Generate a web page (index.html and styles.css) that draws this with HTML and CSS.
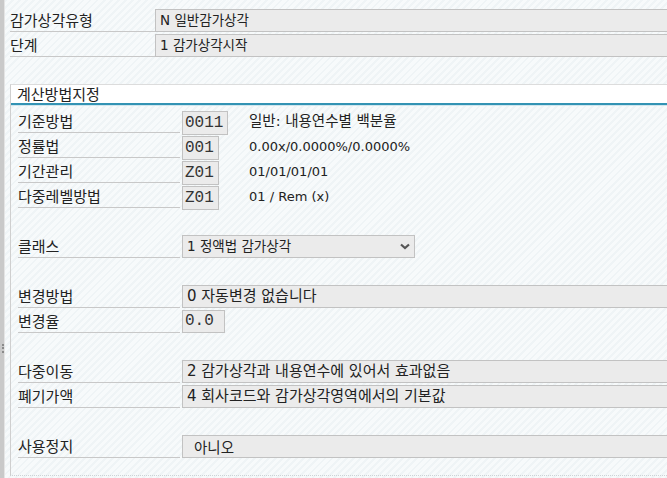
FILE: index.html
```html
<!DOCTYPE html>
<html>

<head>
    <title>감가상각 영역</title>
    <link rel="stylesheet" href="styles.css">
</head>

<body>
    <div class="screen">
        <div class="edge">
            <div class="grip"></div>
        </div>

        <div class="content">
            <div class="top-section">
                <div class="row">
                    <div class="label top-label">감가상각유형</div>
                    <div class="field wide">N 일반감가상각</div>
                </div>
                <div class="row">
                    <div class="label top-label">단계</div>
                    <div class="field wide">1 감가상각시작</div>
                </div>
                <div class="spacer"></div>
            </div>

            <div class="group">
                <div class="group-title">계산방법지정</div>
                <div class="group-body">
                    <div class="row">
                        <div class="label">기준방법</div>
                        <div class="code-cell"><span class="code">0011</span></div>
                        <div class="desc">일반: 내용연수별 백분율</div>
                    </div>
                    <div class="row">
                        <div class="label">정률법</div>
                        <div class="code-cell"><span class="code">001</span></div>
                        <div class="desc num">0.00x/0.0000%/0.0000%</div>
                    </div>
                    <div class="row">
                        <div class="label">기간관리</div>
                        <div class="code-cell"><span class="code">Z01</span></div>
                        <div class="desc num">01/01/01/01</div>
                    </div>
                    <div class="row">
                        <div class="label">다중레벨방법</div>
                        <div class="code-cell"><span class="code">Z01</span></div>
                        <div class="desc num">01 / Rem (x)</div>
                    </div>

                    <div class="spacer"></div>

                    <div class="row">
                        <div class="label">클래스</div>
                        <div class="field select">
                            <span>1 정액법 감가상각</span>
                            <svg class="chevron" width="10" height="7" viewBox="0 0 10 7">
                                <path d="M1 1.5 L5 5 L9 1.5" fill="none" stroke="#555" stroke-width="2.2" />
                            </svg>
                        </div>
                    </div>

                    <div class="spacer"></div>

                    <div class="row">
                        <div class="label">변경방법</div>
                        <div class="field wide large">0 자동변경 없습니다</div>
                    </div>
                    <div class="row">
                        <div class="label">변경율</div>
                        <div class="field rate">0.0</div>
                    </div>

                    <div class="spacer"></div>

                    <div class="row">
                        <div class="label">다중이동</div>
                        <div class="field wide large">2 감가상각과 내용연수에 있어서 효과없음</div>
                    </div>
                    <div class="row">
                        <div class="label">폐기가액</div>
                        <div class="field wide large">4 회사코드와 감가상각영역에서의 기본값</div>
                    </div>

                    <div class="spacer"></div>

                    <div class="row">
                        <div class="label">사용정지</div>
                        <div class="field wide indent">아니오</div>
                    </div>
                </div>
            </div>
        </div>
    </div>
</body>

</html>
```

FILE: styles.css
```css
:root {
    --text-color: #222;
    --field-bg: #ebebeb;
    --field-border: #c2c2c2;
    --line-color: #c8c8c8;
    --accent: #3393b4;
    --bg-a: #f7fafb;
    --bg-b: #eff4f6;
}

* {
    box-sizing: border-box;
    margin: 0;
    padding: 0;
}

body {
    width: 667px;
    height: 478px;
    overflow: hidden;
    font-family: "Noto Sans CJK KR", sans-serif;
    font-size: 15px;
    color: var(--text-color);
    background: repeating-linear-gradient(135deg, var(--bg-a) 0 3px, var(--bg-b) 3px 5px);
}

.screen {
    display: flex;
    height: 478px;
}

.edge {
    width: 5px;
    flex-shrink: 0;
    background: #c9c9c9;
    border-right: 1px solid #e4e4e4;
}

.grip {
    width: 2px;
    height: 9px;
    margin: 344px 0 0 2px;
    border-left: 2px dotted #8a8a8a;
}

.content {
    flex: 1;
    min-width: 0;
    padding-left: 5px;
}

.top-section {
    padding-top: 9px;
}

.row {
    display: flex;
    height: 23px;
    margin-bottom: 2px;
}

.spacer {
    height: 25px;
}

.label {
    width: 162px;
    margin-right: 2px;
    flex-shrink: 0;
    line-height: 22px;
    border-bottom: 1px solid var(--line-color);
    white-space: nowrap;
}

.top-label {
    width: 145px;
    margin-right: 0;
}

.field {
    background: var(--field-bg);
    border: 1px solid var(--field-border);
    padding: 0 4px;
    line-height: 21px;
    white-space: nowrap;
    font-family: "DejaVu Sans", "Noto Sans CJK KR", sans-serif;
    font-size: 13.5px;
}

.field.wide {
    flex: 1;
    margin-right: -2px;
}

.field.large {
    font-size: 15px;
}

.field.indent {
    padding-left: 11px;
    font-family: "Noto Sans CJK KR", sans-serif;
    font-size: 14.5px;
}

.group {
    border-top: 1px solid #dcdcdc;
    border-left: 1px solid #cfcfcf;
    border-bottom: 1px dotted #cdd3d6;
}

.group-title {
    height: 20px;
    padding-left: 6px;
    line-height: 18px;
    background: #fff;
    border-bottom: 2px solid var(--accent);
    box-shadow: 0 1px 0 #cfe6ee;
}

.group-body {
    padding: 5px 0 15px 7px;
}

.code-cell {
    width: 67px;
    flex-shrink: 0;
}

.code,
.rate {
    display: inline-block;
    height: 24px;
    background: var(--field-bg);
    border: 1px solid var(--field-border);
    padding: 0 4px 0 2px;
    font-family: "Liberation Mono", monospace;
    font-size: 16px;
    line-height: 22px;
    color: #333;
}

.rate {
    width: 43px;
    height: 23px;
    line-height: 21px;
}

.desc {
    line-height: 23px;
    white-space: nowrap;
    font-family: "DejaVu Sans", "Noto Sans CJK KR", sans-serif;
    font-size: 14.5px;
}

.desc.num {
    font-size: 13px;
}

.select {
    width: 233px;
    display: flex;
    align-items: center;
    justify-content: space-between;
    padding-right: 4px;
}

.chevron {
    display: block;
}
```
